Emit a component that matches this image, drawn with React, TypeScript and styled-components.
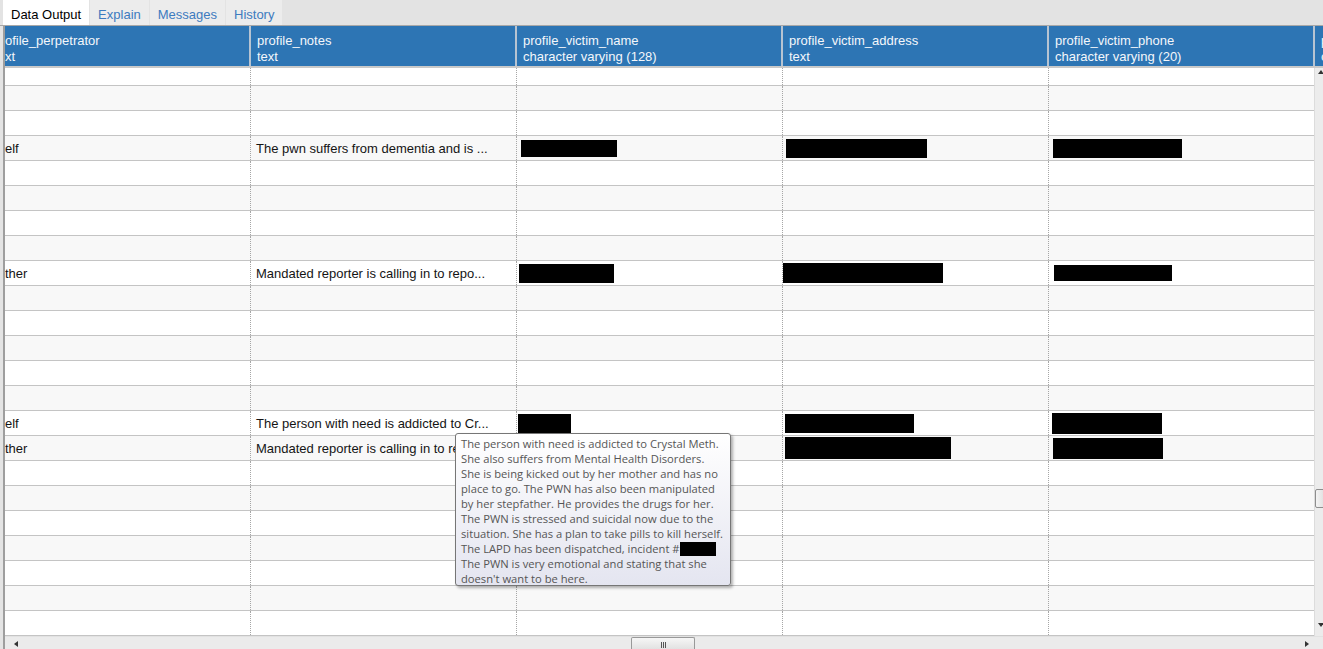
import React from 'react'
import styled, { createGlobalStyle } from 'styled-components'

const GlobalStyle = createGlobalStyle`
  html, body {
    margin: 0;
    padding: 0;
    background: #e4e4e4;
  }
  * {
    box-sizing: border-box;
  }
`

const Window = styled.div`
  width: 1323px;
  height: 649px;
  display: flex;
  flex-direction: column;
  overflow: hidden;
  font-family: 'Liberation Sans', Arial, sans-serif;
  font-size: 13px;
`

const TabBar = styled.div`
  height: 26px;
  display: flex;
  align-items: flex-end;
  padding-left: 3px;
  background: #e3e3e3;
  border-bottom: 1px solid #a8a8a8;
`

const Tab = styled.div<{ $active?: boolean }>`
  height: 25px;
  display: flex;
  align-items: center;
  padding: 3px 8px 0;
  margin-right: 1px;
  background: ${p => (p.$active ? '#ffffff' : '#ececec')};
  color: ${p => (p.$active ? '#000000' : '#3d7bbf')};
`

const Grid = styled.div`
  flex: 1;
  display: flex;
  flex-direction: column;
  margin-left: 3px;
  border-left: 2px solid #9e9e9e;
  background: #ffffff;
  min-height: 0;
`

const HeaderRow = styled.div`
  height: 42px;
  display: flex;
  overflow: hidden;
  background: #2d75b4;
  border-bottom: 2px solid #c9c9c9;
`

const HeaderCell = styled.div<{ $w: number; $pad?: number }>`
  flex: 0 0 ${p => p.$w}px;
  padding: 7px 0 0 ${p => p.$pad ?? 6}px;
  border-right: 2px solid #b7c4d2;
  color: #f4f7fb;
  line-height: 16px;
  white-space: nowrap;
  overflow: hidden;
`

const Body = styled.div`
  flex: 1;
  display: flex;
  min-height: 0;
`

const Rows = styled.div`
  position: relative;
  flex: 1;
  overflow: hidden;
`

const Row = styled.div<{ $h: number; $alt: boolean }>`
  display: flex;
  height: ${p => p.$h}px;
  border-bottom: 1px solid #c4c4c4;
  background: ${p => (p.$alt ? '#f8f8f8' : '#ffffff')};
`

const Cell = styled.div<{ $w: number; $pad?: number }>`
  flex: 0 0 ${p => p.$w}px;
  display: flex;
  align-items: center;
  padding-left: ${p => p.$pad ?? 5}px;
  border-right: 1px dotted #a6a6a6;
  color: #141414;
  white-space: nowrap;
  overflow: hidden;
`

const Redacted = styled.span<{ $w: number; $h: number; $x: number }>`
  display: inline-block;
  flex: 0 0 auto;
  width: ${p => p.$w}px;
  height: ${p => p.$h}px;
  margin-left: ${p => p.$x}px;
  background: #000;
`

const Tooltip = styled.div`
  position: absolute;
  left: 450px;
  top: 365px;
  width: 276px;
  height: 153px;
  padding: 2px 0 0 5px;
  border: 1px solid #767676;
  border-radius: 3px;
  background: linear-gradient(#ffffff, #e4e5f0);
  box-shadow: 2px 2px 3px rgba(0, 0, 0, 0.3);
  color: #555555;
  font-family: 'Open Sans', 'Noto Sans', sans-serif;
  font-size: 11.2px;
  line-height: 15px;
  white-space: nowrap;
`

const TipLine = styled.div`
  display: flex;
  align-items: center;
`

const VScroll = styled.div`
  flex: 0 0 9px;
  position: relative;
  background: #ececec;
  border-left: 1px solid #dcdcdc;
`

const Arrow = styled.span<{ $dir: 'up' | 'down' | 'left' | 'right' }>`
  position: absolute;
  width: 0;
  height: 0;
  border: 3px solid transparent;
  ${p =>
    p.$dir === 'up'
      ? 'top: 2px; left: 3px; border-bottom: 4px solid #333; border-top: 0;'
      : p.$dir === 'down'
        ? 'bottom: 9px; left: 3px; border-top: 4px solid #333; border-bottom: 0;'
        : p.$dir === 'left'
          ? 'left: 9px; top: 4px; border-right: 4px solid #333; border-left: 0;'
          : 'right: 14px; top: 4px; border-left: 4px solid #333; border-right: 0;'}
`

const VThumb = styled.div`
  position: absolute;
  top: 421px;
  left: 0;
  right: -2px;
  height: 19px;
  border: 1px solid #8e8e8e;
  border-radius: 2px;
  background: linear-gradient(90deg, #f4f4f4, #e0e0e0);
`

const HScroll = styled.div`
  height: 13px;
  position: relative;
  background: #ebebeb;
  border-top: 1px solid #e2e2e2;
`

const HThumb = styled.div`
  position: absolute;
  left: 626px;
  top: 0;
  width: 64px;
  height: 14px;
  display: flex;
  justify-content: center;
  align-items: center;
  gap: 1px;
  border: 1px solid #999;
  border-bottom: none;
  border-radius: 2px 2px 0 0;
  background: linear-gradient(#f6f6f6, #dedede);
`

const Grip = styled.span`
  width: 1px;
  height: 6px;
  background: #555;
`

const widths = [246, 266, 266, 266, 266, 266]

const headers: [string, string][] = [
  ['ofile_perpetrator', 'xt'],
  ['profile_notes', 'text'],
  ['profile_victim_name', 'character varying (128)'],
  ['profile_victim_address', 'text'],
  ['profile_victim_phone', 'character varying (20)'],
  ['profile_victim_email', 'character varying (128)'],
]

type Box = [number, number, number]
type Data = { who: string; note: string; name?: Box; addr?: Box; phone?: Box }

const data: Record<number, Data> = {
  3: {
    who: 'elf',
    note: 'The pwn suffers from dementia and is ...',
    name: [96, 17, -1],
    addr: [141, 19, -2],
    phone: [129, 19, -1],
  },
  8: {
    who: 'ther',
    note: 'Mandated reporter is calling in to repo...',
    name: [95, 19, -3],
    addr: [160, 20, -5],
    phone: [118, 16, 0],
  },
  14: {
    who: 'elf',
    note: 'The person with need is addicted to Cr...',
    name: [53, 19, -4],
    addr: [129, 19, -3],
    phone: [110, 21, -2],
  },
  15: {
    who: 'ther',
    note: 'Mandated reporter is calling in to repo...',
    addr: [166, 22, -3],
    phone: [110, 21, -1],
  },
}

const tooltipLines = [
  'The person with need is addicted to Crystal Meth.',
  'She also suffers from Mental Health Disorders.',
  'She is being kicked out by her mother and has no',
  'place to go. The PWN has also been manipulated',
  'by her stepfather. He provides the drugs for her.',
  'The PWN is stressed and suicidal now due to the',
  'situation. She has a plan to take pills to kill herself.',
  'The LAPD has been dispatched, incident #',
  'The PWN is very emotional and stating that she',
  "doesn't want to be here.",
]

const ROW_COUNT = 23

export default function App() {
  return (
    <Window>
      <GlobalStyle />
      <TabBar>
        <Tab $active>Data Output</Tab>
        <Tab>Explain</Tab>
        <Tab>Messages</Tab>
        <Tab>History</Tab>
      </TabBar>
      <Grid>
        <HeaderRow>
          {headers.map(([name, type], i) => (
            <HeaderCell key={name} $w={widths[i]} $pad={i === 0 ? 0 : 6}>
              <div>{name}</div>
              <div>{type}</div>
            </HeaderCell>
          ))}
        </HeaderRow>
        <Body>
          <Rows>
            {Array.from({ length: ROW_COUNT }, (_, i) => {
              const d = data[i]
              return (
                <Row key={i} $h={i === 0 ? 18 : 25} $alt={i % 2 === 1}>
                  <Cell $w={widths[0]} $pad={0}>{d?.who}</Cell>
                  <Cell $w={widths[1]}>{d?.note}</Cell>
                  <Cell $w={widths[2]}>
                    {d?.name && <Redacted $w={d.name[0]} $h={d.name[1]} $x={d.name[2]} />}
                  </Cell>
                  <Cell $w={widths[3]}>
                    {d?.addr && <Redacted $w={d.addr[0]} $h={d.addr[1]} $x={d.addr[2]} />}
                  </Cell>
                  <Cell $w={widths[4]}>
                    {d?.phone && <Redacted $w={d.phone[0]} $h={d.phone[1]} $x={d.phone[2]} />}
                  </Cell>
                </Row>
              )
            })}
            <Tooltip>
              {tooltipLines.map(line => (
                <TipLine key={line}>
                  {line}
                  {line.endsWith('#') && <Redacted $w={36} $h={14} $x={0} />}
                </TipLine>
              ))}
            </Tooltip>
          </Rows>
          <VScroll>
            <Arrow $dir="up" />
            <VThumb />
            <Arrow $dir="down" />
          </VScroll>
        </Body>
        <HScroll>
          <Arrow $dir="left" />
          <HThumb>
            <Grip />
            <Grip />
            <Grip />
          </HThumb>
          <Arrow $dir="right" />
        </HScroll>
      </Grid>
    </Window>
  )
}
